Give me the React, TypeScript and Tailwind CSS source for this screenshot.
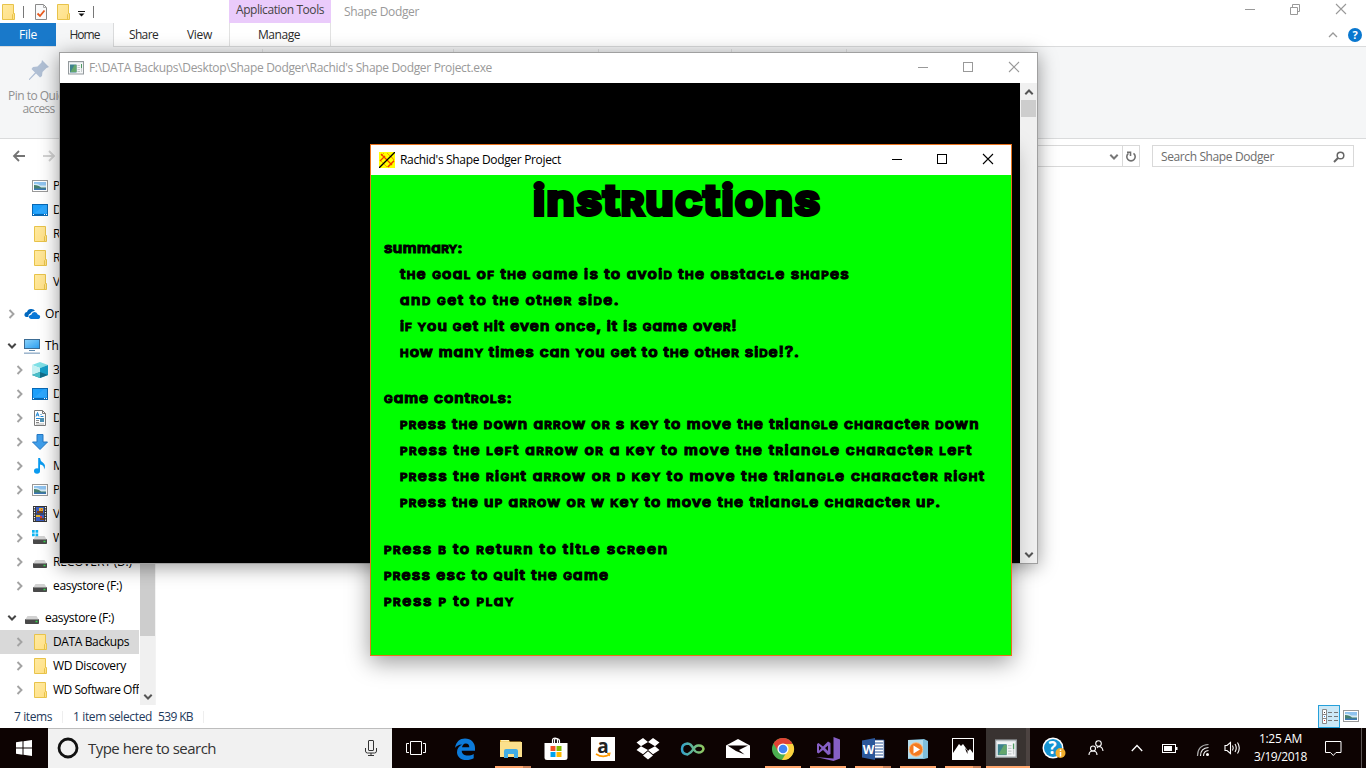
import React, { useLayoutEffect, useRef, useState } from "react";

/** Text whose tracking is adjusted so that it spans exactly `w` pixels. */
function T({ w, children, className = "" }: { w: number; children: string; className?: string }) {
  const ref = useRef<HTMLSpanElement>(null);
  const [gap, setGap] = useState(0);
  useLayoutEffect(() => {
    const el = ref.current;
    if (el) setGap((w - el.getBoundingClientRect().width) / children.length);
  }, []);
  return (
    <span ref={ref} className={"inline-block whitespace-pre " + className} style={{ letterSpacing: gap + "px" }}>
      {children}
    </span>
  );
}

/** Unicase lettering: capitals are drawn at the height of the small letters. */
function Uni({ t, w }: { t: string; w: number }) {
  const ref = useRef<HTMLSpanElement>(null);
  const [gap, setGap] = useState(0);
  useLayoutEffect(() => {
    const el = ref.current;
    if (el) setGap((w - el.offsetWidth) / t.length);
  }, []);
  return (
    <span ref={ref} className="inline-block whitespace-pre" style={{ letterSpacing: gap + "px" }}>
      {t.split(/([A-Z]+)/).map((part, i) =>
        i % 2 ? <span key={i} className="text-[0.75em] leading-none">{part}</span> : part
      )}
    </span>
  );
}

const Folder = () => (
  <svg width="16" height="18" viewBox="0 0 16 18" className="shrink-0">
    <defs>
      <linearGradient id="fold" x1="0" y1="0" x2="1" y2="1">
        <stop offset="0" stopColor="#ffeaa0" />
        <stop offset="1" stopColor="#ffdf85" />
      </linearGradient>
    </defs>
    <path d="M2.500 1.500h11v9h1v6h-12z" fill="url(#fold)" stroke="#e8c34a" />
    <path d="M12.500 16.500v-5l1-1" fill="none" stroke="#e8c34a" />
  </svg>
);
const Picture = () => (
  <svg width="16" height="16" viewBox="0 0 16 16" className="shrink-0">
    <rect x=".5" y="2.500" width="15" height="11" fill="#fff" stroke="#999" />
    <path d="M2 4h12v8H2z" fill="#8fc3ef" />
    <path d="M2 6q4-1 6 1.500h6V12H2z" fill="#d7ebf5" />
    <path d="M2 7q5 0 7 2.500h5V12H2z" fill="#47806f" />
    <path d="M2 10.500h12V12H2z" fill="#3c77b5" />
  </svg>
);
const DesktopIcon = () => (
  <svg width="16" height="16" viewBox="0 0 16 16" className="shrink-0">
    <rect x=".5" y="2.500" width="15" height="11" fill="#1da0fb" stroke="#0868b4" />
    <path d="M1 12h14v1.500H1z" fill="#0868b4" />
    <path d="M1 12.500h1m10 0h1m1 0h1" stroke="#fff" />
    <path d="M3 11L12 3h3v8z" fill="#39acff" opacity=".6" />
  </svg>
);
const Cloud = () => (
  <svg width="17" height="16" viewBox="0 0 17 16" className="shrink-0">
    <path d="M4.500 11H2.500Q0 10.500.500 8 1 6 3 6 4 2.500 7.500 3q2.500 0 3.500 2-3.500-.5-4.500 2.500-2.500.5-2 3.500z" fill="#0067be" />
    <path d="M7 13q-2.500-.5-2-2.700.5-1.600 2.300-1.600Q8 6 10.700 6q2.300.2 3 2.500 2.500.2 2.500 2.300T14.500 13z" fill="#0a78d7" />
  </svg>
);
const Pc = () => (
  <svg width="17" height="16" viewBox="0 0 17 16" className="shrink-0">
    <defs>
      <linearGradient id="pcg" x1="0" y1="0" x2="1" y2="1">
        <stop offset="0" stopColor="#8bd3fb" />
        <stop offset="1" stopColor="#2a9df0" />
      </linearGradient>
    </defs>
    <rect x=".5" y="1.500" width="15" height="9" fill="url(#pcg)" stroke="#3c6c94" />
    <path d="M5 12.500h6" stroke="#5c88ae" />
    <path d="M0 15.200h16" stroke="#9bb4cc" strokeWidth="1.500" />
  </svg>
);
const Cube = () => (
  <svg width="16" height="16" viewBox="0 0 16 16" className="shrink-0">
    <path d="M0 3l8-3 8 3-8 3z" fill="#7fe0e6" />
    <path d="M0 3l8 3v10l-8-3z" fill="#c4f1f3" />
    <path d="M16 3L8 6v10l8-3z" fill="#159fc8" />
    <path d="M8 10l8 3-8 3-8-3z" fill="#12637c" opacity=".85" />
    <path d="M0 13l8-3v6z" fill="#48bfc9" />
  </svg>
);
const Doc = () => (
  <svg width="16" height="16" viewBox="0 0 16 16" className="shrink-0">
    <path d="M2.500.5h8l3 3v12h-11z" fill="#fff" stroke="#7b7b7b" />
    <path d="M10.500.5v3h3" fill="none" stroke="#7b7b7b" />
    <path d="M4 6.500l1.500-4L7 6.500M4.500 5h2M8.500 4.500h1M8.500 6.500h3M4 8.500h4" stroke="#1c86d6" fill="none" />
    <path d="M4 10.500h3M4 12.500h3" stroke="#888" />
    <path d="M8 8h4v4H8z" fill="#4b91b5" />
    <path d="M4 14h8" stroke="#b5b5b5" />
  </svg>
);
const DownArrow = () => (
  <svg width="16" height="16" viewBox="0 0 16 16" className="shrink-0">
    <path d="M5 .5h6V8h4.500L8 15.500.5 8H5z" fill="#3f9eea" stroke="#2578c4" />
  </svg>
);
const Music = () => (
  <svg width="16" height="16" viewBox="0 0 16 16" className="shrink-0">
    <ellipse cx="5" cy="13" rx="3" ry="2.700" fill="#0b9bf0" />
    <path d="M6.200 13V0H8q.3 3 2.800 4.500Q14.500 7 12 11.500 12.500 7 8 6.500V13z" fill="#0b9bf0" />
  </svg>
);
const Film = () => (
  <svg width="16" height="16" viewBox="0 0 16 16" className="shrink-0">
    <path d="M1 0h14v16H1z" fill="#333" />
    <path d="M2.500 1v15M13.500 1v15" stroke="#fff" strokeWidth="1.200" strokeDasharray="1.200 1.300" />
    <path d="M4 1h8v6.500H4zM4 8.500h8V15H4z" fill="#3b5fc4" />
    <path d="M7 2h4v3H7zM4 9h4v2H4z" fill="#e8b32b" />
    <path d="M5 5h6v2H5zM8 12h4v2H8z" fill="#79411d" />
    <path d="M8 10h2v2H8zM9 3h1v1H9z" fill="#da3d38" />
  </svg>
);
const Drive = ({ win = false }: { win?: boolean }) => (
  <svg width="16" height="16" viewBox="0 0 16 16" className="shrink-0">
    <path d="M3.500 6h9L15 10H1z" fill="#d2d2d2" />
    <rect x="1" y="9" width="14" height="5" rx=".8" fill="#494949" />
    <path d="M1.500 9.500h13" stroke="#8a8a8a" />
    <path d="M11.500 11.500h2" stroke="#35d24c" strokeWidth="1.500" />
    {win && <path d="M0 0h2.700v2.700H0zM3.500 0h2.700v2.700H3.500zM0 3.500h2.700v2.700H0zM3.500 3.500h2.700v2.700H3.500z" fill="#10b5f2" />}
  </svg>
);
const Exe = ({ size = 16 }: { size?: number }) => (
  <svg width={size} height={size} viewBox="0 0 16 16" className="shrink-0">
    <rect x=".5" y="1.500" width="15" height="12.500" fill="#f4f6f7" stroke="#949a9d" />
    <path d="M1 2.500h14" stroke="#dfe5e8" />
    <path d="M2 4.500h6.500v8H2z" fill="#3d828e" />
    <path d="M2.500 12l4-7h2v7z" fill="#64a66c" />
    <path d="M9.500 5.500H12M9.500 7.500H12M9.500 9.500H12M9.500 11.500H12" stroke="#c5cacc" />
    <path d="M13.500 4v4" stroke="#4f9a62" />
    <path d="M13.500 8v4" stroke="#c9cfcf" />
  </svg>
);
const ChevR = () => (
  <svg width="8" height="10" viewBox="0 0 8 10">
    <path d="M1.500 1l4 4-4 4" fill="none" stroke="#a3a3a3" strokeWidth="1.900" />
  </svg>
);
const ChevD = ({ color = "#454545" }: { color?: string }) => (
  <svg width="10" height="8" viewBox="0 0 10 8" className="shrink-0">
    <path d="M1.300 1.800l3.700 3.700 3.700-3.700" fill="none" stroke={color} strokeWidth="2" />
  </svg>
);

type Row = { icon: React.ReactNode; text: string; w: number; level?: 0 | 1; chev?: "r" | "d"; gap?: boolean; sel?: boolean };
const ROWS: Row[] = [
  { icon: <Picture />, text: "Pictures", w: 43 },
  { icon: <DesktopIcon />, text: "Desktop", w: 44 },
  { icon: <Folder />, text: "Rachid", w: 36 },
  { icon: <Folder />, text: "Rachid", w: 36 },
  { icon: <Folder />, text: "Visual", w: 33 },
  { icon: <Cloud />, text: "OneDrive", w: 52, level: 0, chev: "r", gap: true },
  { icon: <Pc />, text: "This PC", w: 40, level: 0, chev: "d", gap: true },
  { icon: <Cube />, text: "3D Objects", w: 60, chev: "r" },
  { icon: <DesktopIcon />, text: "Desktop", w: 44, chev: "r" },
  { icon: <Doc />, text: "Documents", w: 62, chev: "r" },
  { icon: <DownArrow />, text: "Downloads", w: 60, chev: "r" },
  { icon: <Music />, text: "Music", w: 33, chev: "r" },
  { icon: <Picture />, text: "Pictures", w: 43, chev: "r" },
  { icon: <Film />, text: "Videos", w: 37, chev: "r" },
  { icon: <Drive win />, text: "Windows (C:)", w: 74, chev: "r" },
  { icon: <Drive />, text: "RECOVERY (D:)", w: 79, chev: "r" },
  { icon: <Drive />, text: "easystore (F:)", w: 69, chev: "r" },
  { icon: <Drive />, text: "easystore (F:)", w: 69, level: 0, chev: "d", gap: true },
  { icon: <Folder />, text: "DATA Backups", w: 76, chev: "r", sel: true },
  { icon: <Folder />, text: "WD Discovery", w: 73, chev: "r" },
  { icon: <Folder />, text: "WD Software Offers", w: 102, chev: "r" },
];

function Sidebar() {
  return (
    <div className="flex w-[156px] shrink-0 border-r border-[#f3f3f3]">
      <div className="w-[139px] shrink-0 overflow-hidden">
        {ROWS.map((r, i) => {
          const root = r.level === 0;
          return (
            <div key={i} className={"flex h-6 items-center " + (r.gap ? "mt-2 " : "") + (r.sel ? "bg-[#d9d9d9]" : "")}>
              <div className={"flex shrink-0 items-center justify-center " + (root ? "w-6" : "ml-[7px] w-[25px]")}>
                {r.chev === "r" ? <ChevR /> : r.chev === "d" ? <ChevD /> : null}
              </div>
              <div className="w-[21px] shrink-0">{r.icon}</div>
              <T w={r.w}>{r.text}</T>
            </div>
          );
        })}
      </div>
      <div className="ml-px flex w-[15px] flex-col bg-[#f0f0f0]">
        <div className="h-[462px] bg-[#cdcdcd]" />
        <div className="flex flex-1 items-end justify-center pb-1">
          <ChevD color="#555" />
        </div>
      </div>
    </div>
  );
}

function Controls({ color, restore = false }: { color: string; restore?: boolean }) {
  return (
    <div className="flex">
      <svg width="46" height="29" viewBox="0 0 46 29" fill="none" stroke={color}>
        <path d="M18 14.500h10" />
      </svg>
      <svg width="45" height="29" viewBox="0 0 45 29" fill="none" stroke={color}>
        {restore ? <path d="M17.500 12.500h7v7h-7zM19.500 12v-2.500h7v7H25" /> : <rect x="17.500" y="9.500" width="9" height="9" />}
      </svg>
      <svg width="47" height="29" viewBox="0 0 47 29" fill="none" stroke={color}>
        <path d="M18 9l10 10M28 9l-10 10" strokeWidth="1.100" />
      </svg>
    </div>
  );
}

function Explorer() {
  return (
    <div className="flex h-[728px] w-full flex-col bg-white">
      <div className="flex h-[23px] shrink-0 justify-between">
        <div className="flex h-[23px] items-center">
          <Folder />
          <i className="mx-[7px] h-3 w-px bg-[#777]" />
          <svg width="14" height="16" viewBox="0 0 14 16" className="ml-[3px]">
            <path d="M1.500.5h8l3 3v12h-11z" fill="#f9fafb" stroke="#8a8a8a" />
            <path d="M9.500.5v3h3" fill="none" stroke="#aaa" />
            <path d="M3.500 9.500l2.500 2.500 4.500-5.500" fill="none" stroke="#e8591c" strokeWidth="1.800" />
          </svg>
          <div className="ml-[7px]"><Folder /></div>
          <svg width="8" height="8" viewBox="0 0 8 8" className="ml-[7px] mt-1">
            <path d="M0 1.500h7" stroke="#111" />
            <path d="M.5 3.500h6l-3 3z" fill="#111" />
          </svg>
          <i className="ml-[7px] h-3 w-px bg-[#777]" />
          <div className="ml-[135px] flex h-[23px] w-[102px] justify-center bg-[#eacbfb] pt-px text-[#444]">
            <T w={88}>Application Tools</T>
          </div>
          <T w={75} className="ml-[13px] text-[#999]">Shape Dodger</T>
        </div>
        <div className="-mt-[5px] mr-px h-[28px]"><Controls color="#999" restore /></div>
      </div>
      <div className="flex h-6 shrink-0 border-b border-[#dadbdc] text-[#2b2b2b]">
        <div className="flex w-14 items-center justify-center bg-[#1979ca] text-white"><T w={18}>File</T></div>
        <div className="-mb-px flex w-[58px] items-center justify-center border-r border-[#dadbdc] bg-[#f5f6f7]"><T w={30}>Home</T></div>
        <div className="flex w-[59px] items-center justify-center"><T w={29}>Share</T></div>
        <div className="flex w-[53px] items-center justify-center"><T w={25}>View</T></div>
        <div className="ml-[3px] flex w-[102px] items-center justify-center border-x border-[#e2e2e2] pr-[2px]"><T w={42}>Manage</T></div>
        <div className="ml-auto flex items-center gap-[10px] pr-[4px]">
          <svg width="10" height="6" viewBox="0 0 10 6"><path d="M1 5l4-4 4 4" fill="none" stroke="#999" strokeWidth="1.300" /></svg>
          <span className="flex size-[14px] items-center justify-center rounded-full bg-[#0877cf] text-[11px] font-bold text-white">?</span>
        </div>
      </div>
      <div className="flex h-[92px] shrink-0 border-b border-[#dadbdc] bg-[#f5f6f7] text-[#919191]">
        <div className="flex w-[77px] shrink-0 flex-col items-center leading-[13px]">
          <svg width="22" height="22" viewBox="0 0 22 22" className="mb-[8px] mt-3" fill="#b0bfd4">
            <path d="M14 1l7 7-2.500 1-4 4-.5 4-2 1.500-4-4L1.500 21H1v-1l6-6.500-3.500-3.500L5 8l4.500-.5 4-4z" />
          </svg>
          <T w={61}>Pin to Quick</T>
          <T w={32}>access</T>
        </div>
        <div className="flex py-[2px]">
          <i className="ml-[185px] w-px bg-[#e0e1e2]" />
          <i className="ml-[190px] w-px bg-[#e0e1e2]" />
          <i className="ml-[144px] w-px bg-[#e0e1e2]" />
          <i className="ml-[132px] w-px bg-[#e0e1e2]" />
          <i className="ml-[114px] w-px bg-[#e0e1e2]" />
        </div>
      </div>
      <div className="flex h-[34px] shrink-0 items-center pr-3 text-[#6d6d6d]">
        <svg width="62" height="14" viewBox="0 0 62 14" fill="none" strokeWidth="1.800">
          <path d="M25 7H14M19 2l-5 5 5 5" stroke="#747474" />
          <path d="M43 7h11M49 2l5 5-5 5" stroke="#d3d3d3" />
        </svg>
        <div className="ml-[50px] flex h-[22px] flex-1 justify-end border border-[#d9d9d9]">
          <div className="flex w-[13px] items-center justify-center pt-[2px]"><ChevD color="#777" /></div>
          <div className="ml-[2px] flex w-[17px] items-center justify-center border-l border-[#d9d9d9] pt-px">
            <svg width="12" height="12" viewBox="0 0 12 12" fill="none" stroke="#707070" strokeWidth="1.600">
              <path d="M8.500 2.300a4.200 4.200 0 1 1-5 0M2 1.300h3.500V5" />
            </svg>
          </div>
        </div>
        <div className="ml-3 flex h-[22px] w-[202px] items-center justify-between border border-[#d9d9d9] px-2 pt-px">
          <T w={113}>Search Shape Dodger</T>
          <svg width="12" height="12" viewBox="0 0 12 12" fill="none" stroke="#666">
            <circle cx="7.500" cy="4.500" r="3.300" strokeWidth="1.500" />
            <path d="M5 7L1 11" strokeWidth="2" />
          </svg>
        </div>
      </div>
      <div className="flex h-[532px] shrink-0 overflow-hidden pt-px">
        <Sidebar />
      </div>
      <div className="flex h-[23px] items-center text-[#1e395b]">
        <T w={38} className="ml-[14px]">7 items</T>
        <i className="ml-[10px] h-3 w-px bg-[#eee]" />
        <T w={79} className="ml-[10px]">1 item selected</T>
        <T w={35} className="ml-[6px]">539 KB</T>
        <i className="ml-[10px] h-3 w-px bg-[#eee]" />
        <div className="ml-auto flex h-[23px] items-center pr-[7px]">
          <svg width="22" height="23" viewBox="0 0 22 23">
            <rect x=".5" y=".5" width="21" height="22" fill="#cce8f6" stroke="#26a0da" />
            <path d="M4.500 4.500h4v14h-4zM4.500 9.500h4M4.500 13.500h4" fill="#fff" stroke="#888" />
            <path d="M10 7.500h4m2 0h4M10 11.500h4m2 0h4M10 15.500h4m2 0h4" stroke="#777" />
            <path d="M6 7h1v1H6z" fill="#444" />
            <path d="M6 11h1v1H6z" fill="#2786dd" />
            <path d="M6 15h1v1H6z" fill="#d32c2c" />
          </svg>
          <div className="-mt-px ml-[3px] w-4"><Picture /></div>
        </div>
      </div>
    </div>
  );
}

const INDENT: [string, number][] = [
  ["tHe GoaL oF tHe Game is to avoiD tHe oBstacLe sHaPes", 450],
  ["anD Get to tHe otHeR siDe.", 220],
  ["iF You Get Hit even once, it is Game oveR!", 338],
  ["How manY times can You Get to tHe otHeR siDe!?.", 400],
];
const KEYS: [string, number][] = [
  ["PRess tHe Down aRRow oR s KeY to move tHe tRianGLe cHaRacteR Down", 580],
  ["PRess tHe LeFt aRRow oR a KeY to move tHe tRianGLe cHaRacteR LeFt", 573],
  ["PRess tHe RiGHt aRRow oR D KeY to move tHe tRianGLe cHaRacteR RiGHt", 586],
  ["PRess tHe uP aRRow oR w KeY to move tHe tRianGLe cHaRacteR uP.", 542],
];

/* The lettering is widened by this factor, so spans are given in unscaled pixels. */
const STRETCH = 1.1;
const Line = ({ t, w }: { t: string; w: number }) => (
  <div className="h-[26px] origin-left scale-x-110"><Uni t={t} w={w / STRETCH} /></div>
);

function Game() {
  return (
    <div className="absolute left-[370px] top-[144px] flex h-[512px] w-[642px] flex-col border border-[#e8721c] bg-white shadow-[0_6px_22px_rgba(0,0,0,0.4)]">
      <div className="flex h-[30px] shrink-0 items-center pl-2 text-black">
        <svg width="16" height="16" viewBox="0 0 16 16">
          <path d="M0 0h16v16H0z" fill="#ff0" />
          <path d="M2 4l3-3M8 1l7 7M1 8l7 7M12 4l3 4-7 7" stroke="#f4a000" fill="none" />
          <path d="M2 2l11 11M1 9l5-5M9 15l6-6" stroke="#f03a00" strokeWidth="1.200" />
          <path d="M0 16L16 0" stroke="#000" strokeWidth="1.300" />
        </svg>
        <T w={161} className="ml-[5px]">Rachid's Shape Dodger Project</T>
        <div className="-mr-px ml-auto h-[30px]"><Controls color="#000" /></div>
      </div>
      <div className="h-[480px] overflow-hidden bg-[#00ff00] font-['Inter',sans-serif] font-semibold text-black [font-feature-settings:'cv11'] [stroke-linejoin:round]">
        <div className="h-[60px] pl-[162px] text-[42px] leading-[49px] [-webkit-text-stroke:4px_#000]">
          <div className="origin-left scale-x-110"><Uni t="instRuctions" w={289 / STRETCH} /></div>
        </div>
        <div className="pl-[13px] text-[14px] leading-[26px] [-webkit-text-stroke:1.100px_#000]">
          <Line t="summaRY:" w={79} />
          <div className="pl-4">{INDENT.map(([t, w]) => <Line key={t} t={t} w={w} />)}</div>
          <div className="mt-[20px]"><Line t="Game contRoLs:" w={129} /></div>
          <div className="pl-4">{KEYS.map(([t, w]) => <Line key={t} t={t} w={w} />)}</div>
          <div className="mt-[21px]">
            <Line t="PRess B to RetuRn to titLe scReen" w={285} />
            <Line t="PRess esc to Quit tHe Game" w={225} />
            <Line t="PRess P to PLaY" w={131} />
          </div>
        </div>
      </div>
    </div>
  );
}

function Console() {
  return (
    <div className="absolute left-[59px] top-[52px] flex h-[512px] w-[979px] flex-col border border-[#a0a0a0] bg-white shadow-[0_3px_18px_rgba(0,0,0,0.4)]">
      <div className="flex h-[30px] shrink-0 items-center pl-2 text-[#999]">
        <Exe />
        <T w={403} className="ml-[5px]">{"F:\\DATA Backups\\Desktop\\Shape Dodger\\Rachid's Shape Dodger Project.exe"}</T>
        <div className="-mr-px ml-auto h-[30px]"><Controls color="#999" /></div>
      </div>
      <div className="flex flex-1 bg-black">
        <div className="ml-auto flex w-[17px] flex-col items-center bg-[#f0f0f0]">
          <div className="flex h-[17px] items-center"><div className="rotate-180"><ChevD color="#555" /></div></div>
          <div className="h-[17px] w-[15px] bg-[#cdcdcd]" />
          <div className="mt-auto flex h-[17px] items-center"><ChevD color="#555" /></div>
        </div>
      </div>
    </div>
  );
}

const S = ({ children, w = 24, h = 24 }: { children: React.ReactNode; w?: number; h?: number }) => (
  <svg width={w} height={h} viewBox="0 0 24 24">{children}</svg>
);

const APPS: { icon: React.ReactNode; bar?: "one" | "many"; active?: boolean }[] = [
  {
    icon: (
      <div className="-ml-[5px]"><S>
        <path d="M2 11C3 4.500 7 1.500 12 1.500c6 0 10 4.200 10 9.500v2.700H8.700c.2 3.400 3 4.800 6 4.800 2.300 0 4.200-.6 6-1.600v4.300c-2 1.200-4.500 1.800-7.300 1.800C7.500 23 4 19.500 4 15.200 4 12 5.800 9.300 9 7.600 5.500 7.700 3 9.500 2 11z" fill="#0c7ad9" />
        <path d="M9 10.300h7.300c0-2.400-1.200-3.900-3.500-3.900-2.200 0-3.500 1.800-3.800 3.900z" fill="#0d0302" />
      </S></div>
    ),
  },
  {
    bar: "many",
    icon: (
      <div className="-ml-[3px]"><S>
        <path d="M1 3h9l1 1.500h11V20H1z" fill="#e9b534" />
        <path d="M1 5h22v15H1z" fill="#fbe08c" />
        <path d="M2 3h8v1.500H2z" fill="#fff1b5" />
        <path d="M5 14q0-2 2-2h10q2 0 2 2v7h-4v-4H9v4H5z" fill="#41ace4" />
      </S></div>
    ),
  },
  {
    icon: (
      <div className="-ml-[3px]"><S>
        <path d="M8.500 7V3.500Q8.500 1 11 1t2.500 2.500V7M10.500 6V3.500Q10.500 1 13 1.500t2.500 2.500v3" fill="none" stroke="#fff" strokeWidth="1.200" />
        <path d="M.5 6h23v14.500q0 2.500-2.500 2.500H3q-2.500 0-2.500-2.500z" fill="#fff" />
        <path d="M6.500 9h5v5h-5z" fill="#f25022" /><path d="M12.500 9h5v5h-5z" fill="#7fba00" />
        <path d="M6.500 15h5v5h-5z" fill="#00a4ef" /><path d="M12.500 15h5v5h-5z" fill="#ffb900" />
      </S></div>
    ),
  },
  {
    icon: (
      <S>
        <path d="M0 0h24v24H0z" fill="#fff" />
        <text x="12" y="15.500" textAnchor="middle" fontSize="19" fontWeight="700" fontFamily="Open Sans, sans-serif" fill="#222">a</text>
        <path d="M5 17q7 4.500 13.500.5" fill="none" stroke="#f90" strokeWidth="1.500" />
        <path d="M16 16.500l3-.3-.8 3" fill="none" stroke="#f90" strokeWidth="1.100" />
      </S>
    ),
  },
  {
    icon: (
      <S>
        <path d="M7 1L.5 5.500 5 9.200 12 5zM17 1l6.500 4.500L19 9.200 12 5zM.5 13L7 17.200l5-4.200-7-3.800zM23.500 13L17 17.200 12 13l7-3.800zM7 18.500l5-4.200 5 4.200-5 4z" fill="#fff" />
      </S>
    ),
  },
  {
    icon: (
      <svg width="26" height="16" viewBox="0 0 26 16">
        <defs><linearGradient id="inf"><stop offset="0" stopColor="#35a3c9" /><stop offset="1" stopColor="#8fc860" /></linearGradient></defs>
        <path d="M18 4.500Q15.500 4.500 13.500 8T7.500 13.500Q2 13 2 8T7.500 2.500Q11 2.500 13.500 8 15.500 11.500 18.500 11.500 22.500 11.500 23.500 8 23 4.500 19 4.500z" fill="none" stroke="url(#inf)" strokeWidth="2.500" />
      </svg>
    ),
  },
  {
    icon: (
      <S>
        <path d="M0 8.500L12 2l12 6.500V21H0z" fill="#fff" />
        <path d="M1.500 8.500h20.500L13 13l5.500 4.500L10 14z" fill="#0d0302" />
      </S>
    ),
  },
  {
    bar: "one",
    icon: (
      <S>
        <circle cx="12" cy="12" r="11" fill="#4caf50" />
        <path d="M12 12L2.500 6.500A11 11 0 0 1 21.500 6.500z" fill="#e14234" />
        <path d="M12 7h9.800A11 11 0 0 1 11 23l5-8.500z" fill="#fcd13f" />
        <path d="M2.500 6.500L7 14l5-7z" fill="#e14234" />
        <circle cx="12" cy="12" r="5.600" fill="#fff" /><circle cx="12" cy="12" r="4.300" fill="#4285f4" />
      </S>
    ),
  },
  {
    bar: "one",
    icon: (
      <S>
        <path d="M17.500 0L24 2.500v19L17.500 24 0 20l17.500 1.500z" fill="#865fc5" />
        <path d="M1 7l1.500-1L7 9.500l5-5L14.500 6v11L12 18l-5-5-4.500 3.500L1 15.500zM3 8.700v5L5.500 11zM12 8.500L9 11l3 3z" fill="#865fc5" fillRule="evenodd" />
      </S>
    ),
  },
  {
    bar: "many",
    icon: (
      <S>
        <path d="M13 3h10v18H13z" fill="#fff" stroke="#2b579a" strokeWidth=".8" />
        <path d="M14 6h8M14 9h8M14 12h8M14 15h8M14 18h8" stroke="#2b579a" strokeWidth="1.200" />
        <path d="M1 3.500L14 1v22L1 20.500z" fill="#2b579a" />
        <text x="7.500" y="16.500" textAnchor="middle" fontSize="12" fontWeight="700" fontFamily="Open Sans, sans-serif" fill="#fff">W</text>
      </S>
    ),
  },
  {
    bar: "one",
    icon: (
      <S>
        <path d="M2 3l16-1 4 2v17l-4 1H2z" fill="#7fbfdc" /><path d="M2 3h15v18H2z" fill="#b4dceb" />
        <circle cx="10" cy="12.500" r="6.800" fill="#f47b20" stroke="#fbb97c" />
        <path d="M7.500 8.500l6.500 4-6.500 4z" fill="#fff" />
      </S>
    ),
  },
  {
    bar: "many",
    icon: (
      <S>
        <path d="M1 1h22v22H1z" fill="#fff" />
        <path d="M2 2h20v14l-3-4-2 2-5-7-2 2-2-2-6 9z" fill="#0d0302" />
        <path d="M14 11l1 3 1.500 3v-3z" fill="#0d0302" />
      </S>
    ),
  },
  { bar: "many", active: true, icon: <Exe size={22} /> },
];

function Taskbar() {
  return (
    <div className="flex h-10 w-full items-stretch bg-[#0d0302] text-white">
      <div className="flex w-12 items-center justify-center">
        <svg width="16" height="16" viewBox="0 0 16 16" fill="#fff"><path d="M0 2.200L6.500 1.300V7.500H0zM7.500 1.200L16 0v7.500H7.500zM0 8.500h6.500v6.200L0 13.800zM7.500 8.500H16V16l-8.500-1.200z" /></svg>
      </div>
      <div className="flex w-[344px] items-center border-t border-[#bdbdbd] bg-[#f1f1f1] pb-px pl-[9px] text-[#333]">
        <svg width="22" height="22" viewBox="0 0 22 22"><circle cx="11" cy="11" r="9" fill="none" stroke="#111" strokeWidth="2.800" /></svg>
        <T w={128} className="ml-[9px] text-[15px]">Type here to search</T>
        <svg width="12" height="18" viewBox="0 0 12 18" className="ml-auto mr-[15px]" fill="none" stroke="#333">
          <rect x="3.500" y="1.500" width="5" height="10" rx=".5" /><path d="M.5 9v3q0 2 2 2h7q2 0 2-2V9M6 14v3M3 16.500h6" />
        </svg>
      </div>
      <div className="flex w-[53px] items-center pl-[14px]">
        <svg width="20" height="16" viewBox="0 0 20 16" fill="none" stroke="#fff">
          <path d="M4.500 1.500h11v13h-11zM3 3.500H.5v9H3M17 3.500h2.500v9H17" />
        </svg>
      </div>
      {APPS.map((a, i) => (
        <div key={i} className={"flex w-[45px] shrink-0 flex-col items-center " + (a.active ? "pl-px" : "")}>
          <div className={"flex h-[38px] items-center justify-center pt-[3px] " + (a.active ? "w-11 border-r-4 border-[#4c4341] bg-[#393331]" : "w-9")}>{a.icon}</div>
          {a.bar && (
            <div className={"flex h-[2px] " + (a.active ? "w-11" : "w-9")}>
              <i className="flex-1 bg-[#ffa66d]" />
              {a.bar === "many" && <i className={a.active ? "w-1 bg-[#ffa66d]" : "w-2 bg-[#c98158]"} />}
            </div>
          )}
        </div>
      ))}
      <div className="ml-[12px] flex w-6 items-center">
        <svg width="24" height="24" viewBox="0 0 24 24">
          <circle cx="11" cy="12" r="10.500" fill="#fff" /><circle cx="11" cy="12" r="9" fill="#1593d2" />
          <text x="10.500" y="18" textAnchor="middle" fontSize="17" fontWeight="700" fontFamily="Open Sans, sans-serif" fill="#fff">?</text>
          <circle cx="18.500" cy="17" r="5" fill="#f2ae2c" /><path d="M18.500 13.500v1.500m0 1v4.500" stroke="#fff" strokeWidth="1.500" />
        </svg>
      </div>
      <div className="flex w-[53px] items-center pl-[22px]">
        <svg width="16" height="16" viewBox="0 0 16 16" className="shrink-0" fill="none" stroke="#fff" strokeWidth="1.100">
          <circle cx="10.500" cy="3.500" r="2.800" /><circle cx="5" cy="8.500" r="2.500" /><path d="M1 15q0-4 4-4t4 4M9 8q1-1.500 2.500-1.500Q14.500 7 15 11" />
        </svg>
      </div>
      <div className="flex items-center pl-[12px]">
        <svg width="12" height="8" viewBox="0 0 12 8"><path d="M.8 7L6 1.500 11.200 7" fill="none" stroke="#fff" strokeWidth="1.300" /></svg>
        <svg width="16" height="10" viewBox="0 0 16 10" className="ml-[19px] mt-px"><rect x=".5" y=".5" width="13" height="8" fill="none" stroke="#fff" /><path d="M2 2h8v5H2zM14 3h1.500v3H14z" fill="#fff" /></svg>
        <svg width="14" height="14" viewBox="0 0 14 14" className="ml-[18px] mt-1" fill="none" strokeWidth="1.200">
          <path d="M1.500 13Q1.500 2 12.500 1.500" stroke="#aaa" /><path d="M4.500 13Q4.500 5 12.500 4.500M7.500 13Q7.500 8 12.500 7.500" stroke="#eee" /><circle cx="11.500" cy="11.500" r="1.500" fill="#fff" />
        </svg>
        <svg width="18" height="14" viewBox="0 0 18 14" className="ml-[14px]" fill="none" stroke="#fff" strokeWidth="1.100">
          <path d="M1 4.500h2L6.500 1.500v11L3 9.500H1zM8.500 4.500q1.500 2.500 0 5M11 3q2.500 4 0 8M13.500 1.500q3.500 5.500 0 11" />
        </svg>
      </div>
      <div className="flex w-[77px] flex-col items-center pt-[2px] leading-[18px]">
        <T w={43}>1:25 AM</T>
        <T w={53}>3/19/2018</T>
      </div>
      <div className="flex items-center pl-[6px]">
        <svg width="17" height="17" viewBox="0 0 17 17" fill="none" stroke="#fff"><path d="M.5 1.500h15.500v11h-5L8.300 15.500 5.500 12.500h-5z" /></svg>
      </div>
      <i className="ml-auto mr-[4px] w-px bg-[#5c5555]" />
    </div>
  );
}

export default function App() {
  return (
    <div className="relative h-[768px] w-[1366px] overflow-hidden bg-white font-['Open_Sans',sans-serif] text-[12px] leading-[18px] text-black">
      <div className="relative h-[728px] overflow-hidden">
        <Explorer />
        <Console />
        <Game />
      </div>
      <Taskbar />
    </div>
  );
}
